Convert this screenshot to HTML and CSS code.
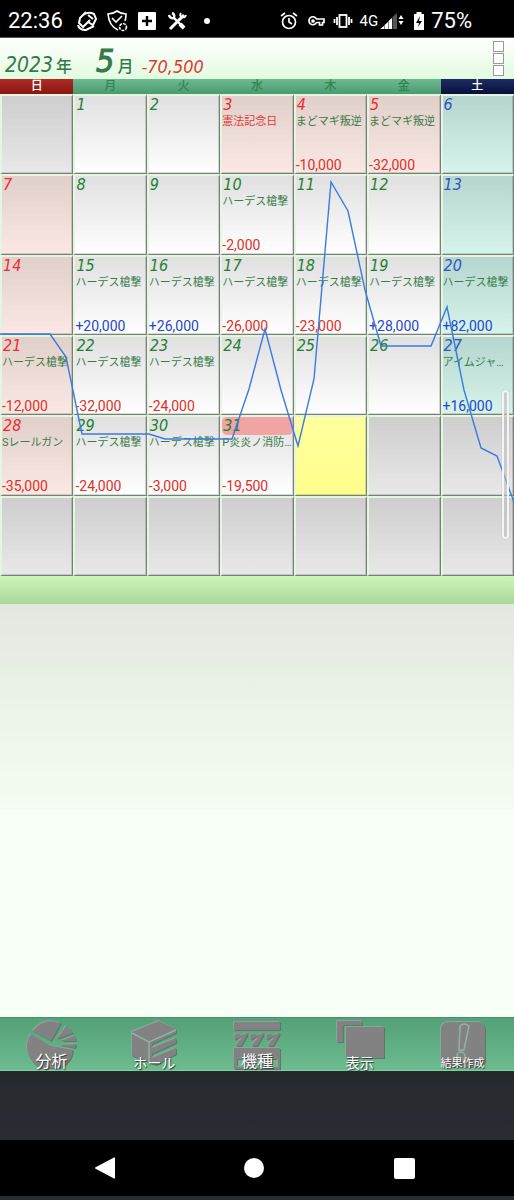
FILE: index.html
```html
<!DOCTYPE html>
<html lang="ja">
<head>
    <meta charset="UTF-8">
    <meta name="viewport" content="width=device-width, initial-scale=1.0">
    <title>収支カレンダー</title>
    <link rel="stylesheet" href="styles.css">
</head>
<body>
    <!-- Status bar -->
    <div class="status-bar">
        <span class="clock">22:36</span>
        <div class="status-left">
            <svg viewBox="0 0 22 22" fill="none" stroke="#fff" stroke-width="2">
                <path d="M10 2L4 8L3 13L7 17L14 10M7 5Q12 1 18 4L20 9L17 15L12 12"/>
                <path d="M2 15Q3 20 10 20L18 16M12 5L17 9"/>
            </svg>
            <svg viewBox="0 0 22 22" fill="none" stroke="#fff" stroke-width="1.6">
                <path d="M12 20Q3 16 2 4Q7 4 11 1Q15 4 20 4Q20 8 19 11M6 8L10 12L16 6"/>
                <circle cx="17" cy="17" r="3.5" stroke-dasharray="3 1"/>
            </svg>
            <svg viewBox="0 0 22 22">
                <rect x="2" y="2" width="18" height="18" rx="1" fill="#fff"/>
                <path d="M11 6v10M6 11h10" stroke="#000" stroke-width="2.4"/>
            </svg>
            <svg viewBox="0 0 22 22" fill="none" stroke="#fff">
                <path d="M4 19L18 5" stroke-width="3"/>
                <path d="M3 5Q4 9 8 8L18 18M6 3Q9 4 8 8" stroke-width="2.4"/>
                <path d="M14 14L18 18" stroke-width="4"/>
                <path d="M15 3Q13 6 16 7Q19 8 20 5" stroke-width="2"/>
            </svg>
            <svg viewBox="0 0 22 22"><circle cx="11" cy="11" r="3" fill="#fff"/></svg>
        </div>
        <div class="status-right">
            <svg viewBox="0 0 20 20" fill="none" stroke="#fff" stroke-width="1.7">
                <circle cx="10" cy="11" r="6.5"/>
                <path d="M10 7v4l3 2M2 5L6 2M18 5L14 2"/>
            </svg>
            <svg viewBox="0 0 20 20" fill="none" stroke="#fff" stroke-width="1.7">
                <path d="M10.500 8H18V11.500H16.500V14H13.500V11.500H10.500A4 4 0 1 1 10.500 8Z"/>
                <circle cx="7" cy="10" r="1"/>
            </svg>
            <svg viewBox="0 0 20 20" fill="none" stroke="#fff" stroke-width="1.8">
                <rect x="6.500" y="4" width="7" height="12"/>
                <path d="M4 6v8M1.500 8v4M16 6v8M18.500 8v4"/>
            </svg>
            <span class="network">4G</span>
            <svg class="signal" viewBox="0 0 24 20">
                <path d="M0 18L4 15V18ZM4.500 14L8 11V18H4.500ZM8.500 10L12 7V18H8.500Z" fill="#fff"/>
                <path d="M12.500 6L17 2V18H12.500Z" fill="#555"/>
                <path d="M18.500 8L21 4L23.500 8ZM18.500 10L21 14L23.500 10Z" fill="#fff"/>
            </svg>
            <svg class="battery" viewBox="0 0 12 20">
                <path d="M1 3H3.500V1H8.500V3H11V19H1Z" fill="#fff"/>
                <path d="M7 5L3 12H6L5 16L9 10H6Z" fill="#000"/>
            </svg>
            <span class="percent">75%</span>
        </div>
    </div>

    <!-- Month header -->
    <header class="month-header">
        <h1 class="month-title">
            <span class="year digits">2023</span><span class="unit">年</span>
            <span class="month digits">5</span><span class="unit">月</span>
        </h1>
        <span class="total digits">-70,500</span>
        <button type="button" class="menu-button" aria-label="メニュー"><i></i><i></i><i></i></button>
    </header>

    <!-- Calendar -->
    <main class="calendar-area">
        <table class="calendar">
            <thead>
                <tr>
                    <th class="sun">日</th>
                    <th>月</th>
                    <th>火</th>
                    <th>水</th>
                    <th>木</th>
                    <th>金</th>
                    <th class="sat">土</th>
                </tr>
            </thead>
            <tbody>
                <tr>
                    <td class="empty"></td>
                    <td><div class="num digits">1</div></td>
                    <td><div class="num digits">2</div></td>
                    <td class="holiday"><div class="num digits">3</div><div class="name red">憲法記念日</div></td>
                    <td class="holiday"><div class="num digits">4</div><div class="name">まどマギ叛逆</div><div class="amount minus">-10,000</div></td>
                    <td class="holiday"><div class="num digits">5</div><div class="name">まどマギ叛逆</div><div class="amount minus">-32,000</div></td>
                    <td class="saturday"><div class="num digits">6</div></td>
                </tr>
                <tr>
                    <td class="holiday"><div class="num digits">7</div></td>
                    <td><div class="num digits">8</div></td>
                    <td><div class="num digits">9</div></td>
                    <td><div class="num digits">10</div><div class="name">ハーデス槍撃</div><div class="amount minus">-2,000</div></td>
                    <td><div class="num digits">11</div></td>
                    <td><div class="num digits">12</div></td>
                    <td class="saturday"><div class="num digits">13</div></td>
                </tr>
                <tr>
                    <td class="holiday"><div class="num digits">14</div></td>
                    <td><div class="num digits">15</div><div class="name">ハーデス槍撃</div><div class="amount plus">+20,000</div></td>
                    <td><div class="num digits">16</div><div class="name">ハーデス槍撃</div><div class="amount plus">+26,000</div></td>
                    <td><div class="num digits">17</div><div class="name">ハーデス槍撃</div><div class="amount minus">-26,000</div></td>
                    <td><div class="num digits">18</div><div class="name">ハーデス槍撃</div><div class="amount minus">-23,000</div></td>
                    <td><div class="num digits">19</div><div class="name">ハーデス槍撃</div><div class="amount plus">+28,000</div></td>
                    <td class="saturday"><div class="num digits">20</div><div class="name">ハーデス槍撃</div><div class="amount plus">+82,000</div></td>
                </tr>
                <tr>
                    <td class="holiday"><div class="num digits">21</div><div class="name">ハーデス槍撃</div><div class="amount minus">-12,000</div></td>
                    <td><div class="num digits">22</div><div class="name">ハーデス槍撃</div><div class="amount minus">-32,000</div></td>
                    <td><div class="num digits">23</div><div class="name">ハーデス槍撃</div><div class="amount minus">-24,000</div></td>
                    <td><div class="num digits">24</div></td>
                    <td><div class="num digits">25</div></td>
                    <td><div class="num digits">26</div></td>
                    <td class="saturday"><div class="num digits">27</div><div class="name">アイムジャ…</div><div class="amount plus">+16,000</div></td>
                </tr>
                <tr>
                    <td class="holiday"><div class="num digits">28</div><div class="name">Sレールガン</div><div class="amount minus">-35,000</div></td>
                    <td><div class="num digits">29</div><div class="name">ハーデス槍撃</div><div class="amount minus">-24,000</div></td>
                    <td><div class="num digits">30</div><div class="name">ハーデス槍撃</div><div class="amount minus">-3,000</div></td>
                    <td><div class="num digits today">31</div><div class="name">P炎炎ノ消防…</div><div class="amount minus">-19,500</div></td>
                    <td class="selected"></td>
                    <td class="empty"></td>
                    <td class="empty"></td>
                </tr>
                <tr>
                    <td class="empty"></td>
                    <td class="empty"></td>
                    <td class="empty"></td>
                    <td class="empty"></td>
                    <td class="empty"></td>
                    <td class="empty"></td>
                    <td class="empty"></td>
                </tr>
            </tbody>
        </table>
        <!-- Running balance line -->
        <svg class="chart" viewBox="0 0 514 497" preserveAspectRatio="none">
            <polyline points="0,255 50,255 66,278 82,355 149,355 165,360 232,360 249,310 265,250 281,311 298,367 314,300 331,103 348,132 365,211 381,267 431,267 447,228 464,311 481,369 497,377 514,423"/>
        </svg>
        <div class="scroll-thumb"></div>
    </main>
    <div class="band"></div>
    <section class="memo"></section>

    <!-- Bottom toolbar -->
    <nav class="toolbar">
        <button type="button">
            <svg viewBox="0 0 52 52">
                <path d="M6 16L24 27L27 28L48 32Q47 41 41 46L35 50H16A23 23 0 0 1 6 16Z"/>
                <path d="M8 13Q18 -1 36 5L26 23Z"/>
                <path d="M32 21L41 8Q46 12 48 15Z"/>
                <path d="M36 23L49 18Q51 20 51 23Z"/>
                <path d="M35 27L51 26Q51 28 50 30Z"/>
            </svg>
            <span class="large">分析</span>
        </button>
        <button type="button">
            <svg viewBox="0 0 52 52">
                <path d="M4 14L31 3L48 11V15L24 26V30L48 20V25L24 36V40L48 30V36L28 47L4 38Z"/>
                <path class="edge" d="M4 15L21 24L48 12M21 24V44"/>
            </svg>
            <span>ホール</span>
        </button>
        <button type="button">
            <svg viewBox="0 0 52 52">
                <path d="M3 4H49V12H3Z"/>
                <path d="M3 17Q7 14 10 17L17 15Q15 20 10 28H5Q7 23 11 20Q6 19 4 22ZM19 17Q23 14 26 17L33 15Q31 20 26 28H21Q23 23 27 20Q22 19 20 22ZM35 17Q39 14 42 17L49 15Q47 20 42 28H37Q39 23 43 20Q38 19 36 22Z"/>
                <path fill-rule="evenodd" d="M3 30H49V51H3ZM6 41V49H16V41ZM20 41V49H32V41ZM36 41V49H47V41Z"/>
            </svg>
            <span class="large">機種</span>
        </button>
        <button type="button">
            <svg viewBox="0 0 52 52">
                <path d="M3 3H28V7H9V24H3Z"/>
                <path d="M12 9H50V40H12Z"/>
            </svg>
            <span>表示</span>
        </button>
        <button type="button">
            <svg viewBox="0 0 52 52">
                <rect x="4" y="4" width="44" height="45" rx="7"/>
                <path class="edge" d="M23 8Q27 4 32 8L27 32H22Z"/>
                <circle class="edge" cx="24" cy="38" r="4"/>
            </svg>
            <span class="small">結果作成</span>
        </button>
    </nav>
    <div class="ad-space"></div>

    <!-- System navigation -->
    <div class="system-nav">
        <button type="button" aria-label="戻る">
            <svg viewBox="0 0 24 24"><path d="M22 2V22Q22 23 21 22.500L3 13Q1 12 3 11L21 1.500Q22 1 22 2Z"/></svg>
        </button>
        <button type="button" aria-label="ホーム">
            <svg viewBox="0 0 24 24"><circle cx="12" cy="12" r="10"/></svg>
        </button>
        <button type="button" aria-label="アプリ履歴">
            <svg viewBox="0 0 24 24"><rect x="2" y="2" width="21" height="21" rx="2"/></svg>
        </button>
    </div>
</body>
</html>
```
FILE: styles.css
```css
* {
    box-sizing: border-box;
}
body {
    margin: 0;
    min-height: 100vh;
    display: flex;
    flex-direction: column;
    background-color: #282c33;
    font-family: Roboto, "Noto Sans CJK JP", sans-serif;
}
button {
    border: none;
    padding: 0;
    background: none;
    font-family: inherit;
    cursor: pointer;
}
.digits {
    font-family: "DejaVu Sans Condensed", "DejaVu Sans", sans-serif;
    font-style: italic;
}

/* Status bar */
.status-bar {
    display: flex;
    align-items: center;
    height: 38px;
    padding: 4px 42px 0 8px;
    background-color: #000;
    border-bottom: 1px solid #555;
    color: #fff;
}
.clock, .percent {
    font-size: 22px;
    line-height: 24px;
}
.status-left {
    display: flex;
    gap: 8px;
    margin-left: 13px;
}
.status-left svg {
    width: 22px;
    height: 22px;
}
.status-right {
    display: flex;
    align-items: center;
    margin-left: auto;
}
.status-right svg {
    width: 20px;
    height: 20px;
    margin-right: 7px;
}
.network {
    font-size: 15px;
    margin-right: 2px;
}
.status-right .signal {
    width: 24px;
    margin-right: 9px;
}
.status-right .battery {
    width: 12px;
    margin-right: 6px;
}

/* Month header */
.month-header {
    display: flex;
    align-items: flex-end;
    height: 41px;
    padding: 0 10px 0 5px;
    background: linear-gradient(#ffffff, #e2fbdf);
}
.month-title {
    display: flex;
    align-items: baseline;
    margin: 0;
    font-weight: normal;
    font-size: 16px;
    line-height: 24px;
    color: #35794a;
    white-space: nowrap;
}
.year {
    font-size: 21px;
}
.unit {
    font-size: 16px;
    font-weight: 500;
    margin-left: 3px;
}
.month {
    font-size: 32px;
    line-height: 32px;
    -webkit-text-stroke: 1px #35794a;
    margin-left: 24px;
}
.total {
    font-size: 18px;
    line-height: 24px;
    color: #e03a32;
    margin-left: 8px;
}
.menu-button {
    display: flex;
    flex-direction: column;
    align-self: flex-start;
    gap: 1px;
    margin: 3px 0 0 auto;
}
.menu-button i {
    width: 11px;
    height: 11px;
    border: 1px solid #999;
    background-color: #fff;
}

/* Calendar */
.calendar-area {
    position: relative;
}
.calendar {
    width: 100%;
    height: 497px;
    table-layout: fixed;
    border-spacing: 0;
    background-color: #e4f3e0;
}
th {
    height: 15px;
    padding: 0;
    font-size: 12px;
    line-height: 15px;
    font-weight: 500;
    color: #2f8550;
    background: linear-gradient(#6dba90, #4b9a6d);
}
th.sun {
    color: #fff;
    background: linear-gradient(#ad2c25, #8a1610);
}
th.sat {
    color: #fff;
    background: linear-gradient(#1c2c63, #08103a);
}
td {
    height: 80px;
    padding: 0;
    vertical-align: top;
    border: 2px solid #e6f4e2;
    border-right: 1px solid #768278;
    border-bottom: 1px solid #768278;
    box-shadow: inset -1px -1px 0 rgba(0, 0, 0, 0.15);
    background: linear-gradient(#e0e0e0, #ffffff);
    color: #218030;
}
td.empty {
    background: linear-gradient(#cecece, #e8e8e8);
}
td.holiday {
    background: linear-gradient(#e0d0c9, #fbe8e4);
    color: #f02a30;
}
td.saturday {
    background: linear-gradient(#b5d5ce, #d6f4eb);
    color: #2c55c0;
}
td.selected {
    background: linear-gradient(#ffff9e, #ffff8c);
}
.num {
    font-size: 16px;
    line-height: 18px;
    height: 18px;
    padding-left: 1px;
}
.today {
    background-color: #f2a3a3;
    border-radius: 5px;
}
.name {
    height: 16px;
    margin-bottom: 27px;
    font-size: 11px;
    line-height: 16px;
    color: #3a7c4c;
    white-space: nowrap;
}
.name.red {
    color: #e23b38;
}
.amount {
    height: 16px;
    font-size: 14px;
    line-height: 16px;
}
.plus {
    color: #1f48c8;
}
.minus {
    color: #dc3028;
}
.chart {
    position: absolute;
    top: 0;
    left: 0;
    width: 100%;
    height: 100%;
    pointer-events: none;
}
.chart polyline {
    fill: none;
    stroke: #3a7be0;
    stroke-width: 1.4;
}
.scroll-thumb {
    position: absolute;
    top: 311px;
    right: 5px;
    width: 7px;
    height: 149px;
    border: 2px solid #f4f4f4;
    border-radius: 4px;
    background-color: rgba(190, 190, 190, 0.6);
    box-shadow: 0 0 1px 0 #888;
}

/* Area under the calendar */
.band {
    height: 28px;
    background: linear-gradient(#cbf7b8, #a8d898);
}
.memo {
    flex: 1;
    background: linear-gradient(#e2e8df, #f5fdf2 50%, #f8fff7 50%);
}

/* Bottom toolbar */
.toolbar {
    display: grid;
    grid-template-columns: repeat(5, 1fr);
    height: 54px;
    border-top: 1px solid #4c8f6a;
    border-bottom: 1px solid #7fd0a4;
    background: linear-gradient(#54a078, #6cbc90);
}
.toolbar button {
    display: grid;
    justify-items: center;
    align-items: end;
}
.toolbar svg, .toolbar span {
    grid-area: 1 / 1;
}
.toolbar svg {
    width: 52px;
    height: 52px;
    fill: #828282;
    filter: drop-shadow(-1px -1px 0 #87a898) drop-shadow(1px 1px 0 #5b7a69);
}
.toolbar .edge {
    fill: none;
    stroke: #8fb3a0;
    stroke-width: 1.5;
}
.toolbar span {
    z-index: 1;
    font-size: 14px;
    line-height: 14px;
    color: #fff;
    text-shadow: 1px 1px 1px #333;
}
.toolbar .large {
    font-size: 16px;
    line-height: 16px;
}
.toolbar .small {
    font-size: 11px;
    line-height: 13px;
}
.ad-space {
    height: 69px;
    background: linear-gradient(#26292c, #292c33);
}

/* System navigation */
.system-nav {
    display: flex;
    justify-content: space-between;
    align-items: center;
    height: 56px;
    margin-bottom: 4px;
    padding: 0 19% 0 18%;
    background-color: #000;
}
.system-nav svg {
    display: block;
    width: 24px;
    height: 24px;
    fill: #fff;
}
```
